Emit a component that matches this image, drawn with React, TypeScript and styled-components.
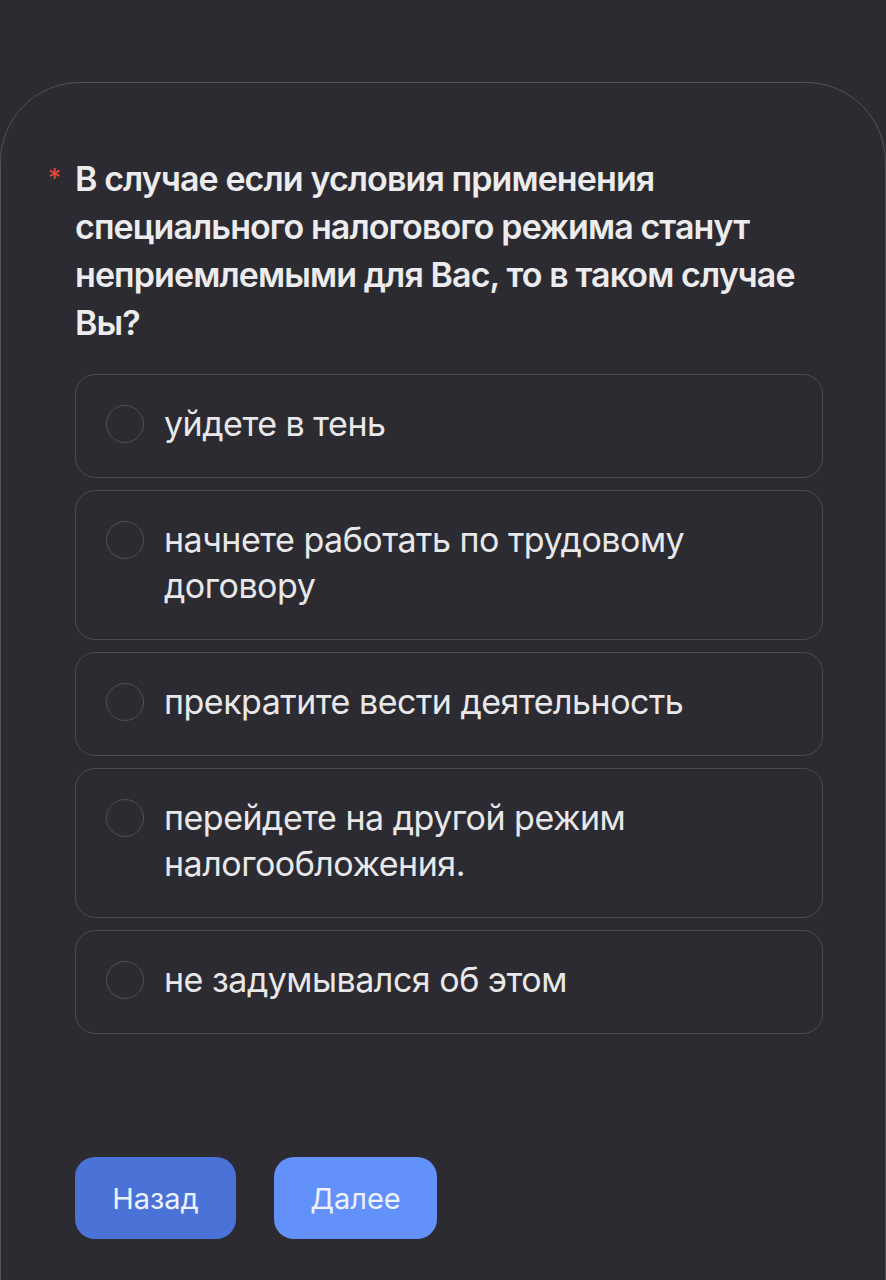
import * as React from 'react'
import styled, { createGlobalStyle } from 'styled-components'

const GlobalStyle = createGlobalStyle`
  * {
    box-sizing: border-box;
  }
  html, body {
    margin: 0;
    padding: 0;
    background: #2c2b31;
  }
  body {
    font-family: Inter, 'Noto Sans', sans-serif;
    color: #ececee;
    overflow: hidden;
  }
`

const Page = styled.div`
  width: 886px;
  height: 1280px;
  padding-top: 82px;
  overflow: hidden;
`

const Card = styled.div`
  width: 100%;
  min-height: 1300px;
  border: 1.5px solid #525158;
  border-radius: 80px;
  padding: 72px 62px 0 74px;
`

const Question = styled.div`
  position: relative;
  font-size: 34px;
  font-weight: 600;
  line-height: 48px;
  letter-spacing: -0.9px;
  color: #ececee;
  margin-bottom: 27px;
`

const Required = styled.span`
  position: absolute;
  left: -27px;
  top: -1px;
  color: #e5483d;
  font-size: 26px;
  font-weight: 400;
  letter-spacing: 0;
`

const Options = styled.div`
  display: flex;
  flex-direction: column;
  gap: 12px;
`

const Option = styled.label`
  display: flex;
  align-items: flex-start;
  gap: 20px;
  padding: 26px 30px 30px;
  border: 1.5px solid #4c4b52;
  border-radius: 20px;
  font-size: 34px;
  line-height: 46px;
  letter-spacing: -0.5px;
  color: #e8e8ea;
  cursor: pointer;
`

const Radio = styled.span`
  flex: none;
  width: 38px;
  height: 38px;
  margin-top: 4px;
  border-radius: 50%;
  border: 1.5px solid #515057;
`

const Buttons = styled.div`
  display: flex;
  gap: 38px;
  margin-top: 123px;
`

const Button = styled.button<{ $primary?: boolean }>`
  height: 82px;
  width: ${p => (p.$primary ? '163px' : '161px')};
  border: none;
  border-radius: 20px;
  background: ${p => (p.$primary ? '#6391fa' : '#4b72d7')};
  color: #eef2fd;
  font-family: Inter, 'Noto Sans', sans-serif;
  font-size: 29px;
  font-weight: 400;
`

const answers = [
  'уйдете в тень',
  'начнете работать по трудовому договору',
  'прекратите вести деятельность',
  'перейдете на другой режим налогообложения.',
  'не задумывался об этом',
]

export default function App() {
  return (
    <Page>
      <GlobalStyle />
      <Card>
        <Question>
          <Required>*</Required>
          В случае если условия применения специального налогового режима станут неприемлемыми для Вас, то в таком случае Вы?
        </Question>
        <Options>
          {answers.map(a => (
            <Option key={a}>
              <Radio />
              <span>{a}</span>
            </Option>
          ))}
        </Options>
        <Buttons>
          <Button>Назад</Button>
          <Button $primary>Далее</Button>
        </Buttons>
      </Card>
    </Page>
  )
}
